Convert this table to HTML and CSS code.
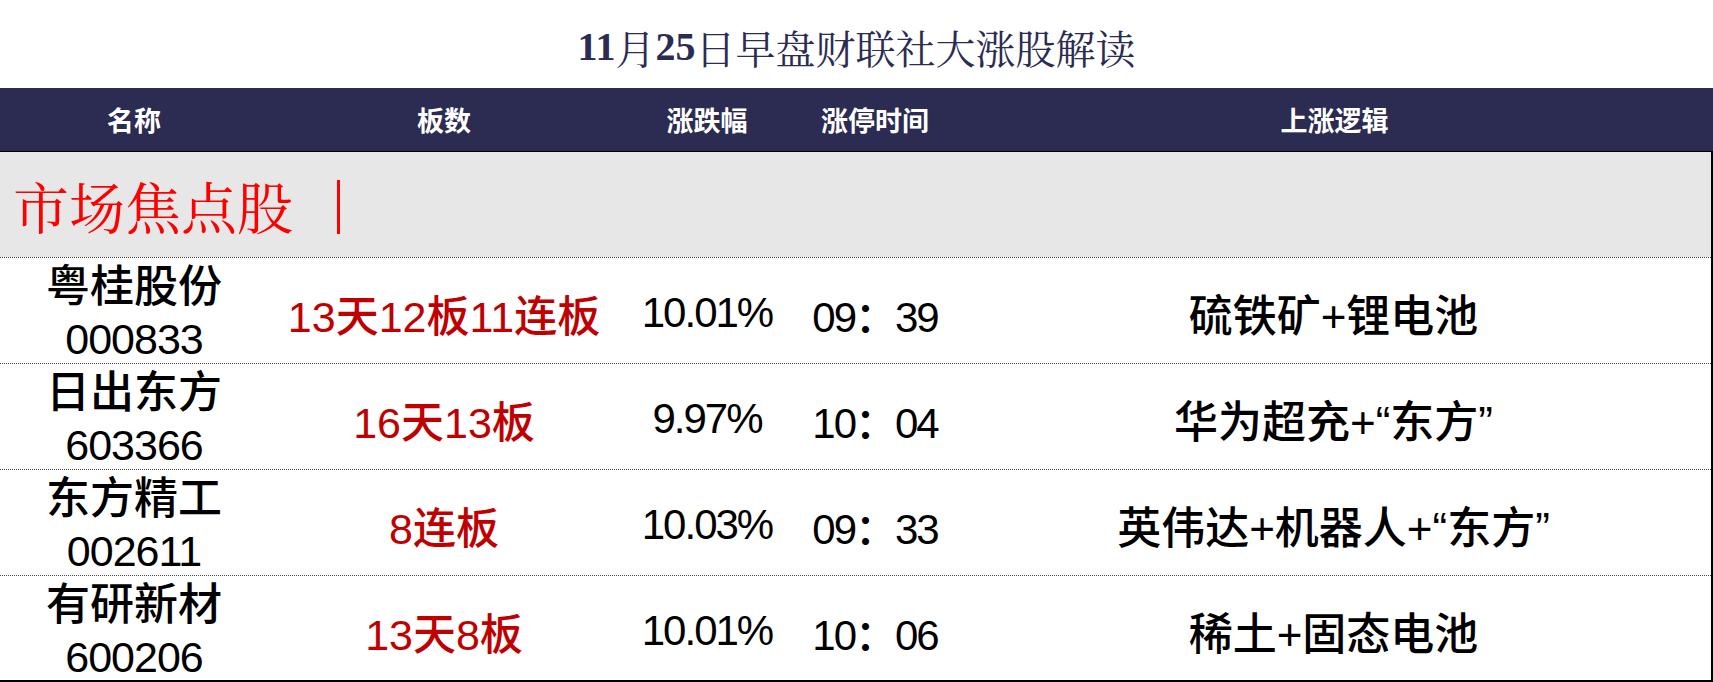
FILE: index.html
```html
<!DOCTYPE html>
<html lang="zh-CN">
<head>
<meta charset="utf-8">
<title>11月25日早盘财联社大涨股解读</title>
<link rel="stylesheet" href="styles.css">
</head>
<body>
<div class="page">
  <h1 class="title"><b>11</b>月<b>25</b>日早盘财联社大涨股解读</h1>
  <div class="table">
    <div class="head">
      <div>名称</div>
      <div>板数</div>
      <div>涨跌幅</div>
      <div>涨停时间</div>
      <div>上涨逻辑</div>
    </div>
    <div class="body">
      <div class="section"><span class="section-text">市场焦点股</span><span class="bar"></span></div>
      <div class="row">
        <div class="name"><span>粤桂股份</span><span class="code">000833</span></div>
        <div class="boards">13天12板11连板</div>
        <div class="num">10.01%</div>
        <div class="num">09：39</div>
        <div class="logic">硫铁矿+锂电池</div>
      </div>
      <div class="row">
        <div class="name"><span>日出东方</span><span class="code">603366</span></div>
        <div class="boards">16天13板</div>
        <div class="num">9.97%</div>
        <div class="num">10：04</div>
        <div class="logic">华为超充+“东方”</div>
      </div>
      <div class="row">
        <div class="name"><span>东方精工</span><span class="code">002611</span></div>
        <div class="boards">8连板</div>
        <div class="num">10.03%</div>
        <div class="num">09：33</div>
        <div class="logic">英伟达+机器人+“东方”</div>
      </div>
      <div class="row last">
        <div class="name"><span>有研新材</span><span class="code">600206</span></div>
        <div class="boards">13天8板</div>
        <div class="num">10.01%</div>
        <div class="num">10：06</div>
        <div class="logic">稀土+固态电池</div>
      </div>
    </div>
  </div>
</div>
</body>
</html>
```

FILE: styles.css
```css
* { box-sizing: border-box; }
html, body { margin: 0; padding: 0; background: #ffffff; }
.page {
  width: 1713px;
  height: 682px;
  overflow: hidden;
  font-family: "Liberation Sans", "Noto Sans CJK SC", sans-serif;
  color: #000;
}
.title {
  margin: 0;
  height: 88px;
  padding-top: 4px;
  display: flex;
  align-items: center;
  justify-content: center;
  font-family: "Liberation Serif", "Noto Serif CJK SC", "Noto Sans CJK SC", serif;
  font-weight: 400;
  font-size: 40px;
  color: #2b2c52;
}
.title b { font-weight: 700; }
.head {
  display: grid;
  grid-template-columns: 268px 352px 174px 162px 1fr;
  height: 64px;
  background: #2c2b52;
  border-bottom: 1px solid #000;
  align-items: center;
  color: #ffffff;
  font-family: "Noto Sans CJK SC", sans-serif;
  font-weight: 700;
  font-size: 27px;
  text-align: center;
}
.body {
  width: 1713px;
  border-right: 2px solid #000;
}
.section {
  height: 105px;
  background: #e7e7e7;
  display: flex;
  align-items: center;
  padding-left: 13px;
  color: #ff0000;
}
.section-text {
  font-family: "Noto Serif CJK SC", "Liberation Serif", "Noto Sans CJK SC", serif;
  font-size: 56px;
  line-height: 1;
}
.bar {
  display: inline-block;
  width: 3px;
  height: 54px;
  margin-left: 44px;
  margin-top: 4px;
  background: #ff0000;
}
.row {
  display: grid;
  grid-template-columns: 268px 352px 174px 162px 1fr;
  height: 106px;
  border-top: 1px dotted #444;
  align-items: center;
  text-align: center;
  font-weight: 500;
}
.row.last {
  height: 107px;
  border-bottom: 2px solid #000;
}
.name {
  display: flex;
  flex-direction: column;
  align-items: center;
  font-size: 44px;
  line-height: 53px;
  padding-top: 2px;
}
.name .code { font-size: 43px; letter-spacing: -1px; }
.boards {
  color: #c00000;
  font-size: 43px;
  padding-top: 2px;
}
.num {
  font-size: 42px;
  letter-spacing: -2px;
  padding-top: 2px;
}
.logic {
  font-size: 44px;
  padding-top: 2px;
}
```
